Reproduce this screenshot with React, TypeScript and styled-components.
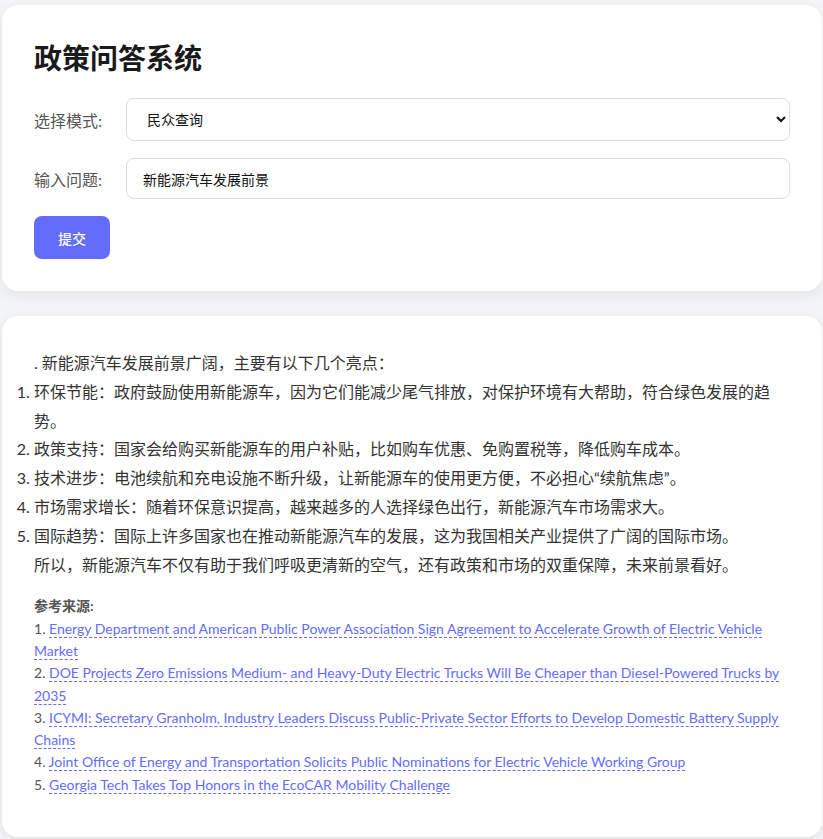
import React, { useState } from "react";
import styled, { createGlobalStyle } from "styled-components";

const GlobalStyle = createGlobalStyle`
  html, body {
    margin: 0;
    padding: 0;
    background: #f3f4f6;
  }
  body {
    font-family: "Lato", "Noto Sans CJK SC", sans-serif;
    color: #333;
  }
  * { box-sizing: border-box; }
`;

const Page = styled.div`
  display: flex;
  flex-direction: column;
  gap: 25px;
  padding: 5px 1px 4px 2px;
`;

const Card = styled.section<{ $bottom?: number }>`
  background: #fff;
  border-radius: 16px;
  box-shadow: 0 4px 14px rgba(0, 0, 0, 0.07);
  padding: 32px;
  padding-bottom: ${(p) => p.$bottom ?? 32}px;
`;

const Title = styled.h1`
  margin: 0 0 19px;
  font-size: 28px;
  line-height: 42px;
  font-weight: 700;
  color: #1a1a1a;
`;

const Form = styled.form`
  display: flex;
  flex-direction: column;
  gap: 17px;
  align-items: flex-start;
`;

const Row = styled.div`
  display: grid;
  grid-template-columns: 92px 1fr;
  align-items: center;
  width: 100%;
`;

const Label = styled.label`
  font-size: 16px;
  color: #555;
`;

const Select = styled.select`
  height: 43px;
  width: 100%;
  padding: 0 12px 0 16px;
  font-family: inherit;
  font-size: 14px;
  color: #111;
  background: #fff;
  border: 1px solid #dcdcdc;
  border-radius: 8px;
`;

const Input = styled.input`
  height: 41px;
  width: 100%;
  padding: 0 16px;
  font-family: inherit;
  font-size: 14px;
  color: #111;
  background: #fff;
  border: 1px solid #dcdcdc;
  border-radius: 8px;
  outline: none;
`;

const Button = styled.button`
  height: 43px;
  padding: 0 24px;
  border: none;
  border-radius: 8px;
  background: #646cff;
  color: #fff;
  font-family: inherit;
  font-size: 14px;
  font-weight: 500;
  cursor: pointer;
`;

const Answer = styled.div`
  font-size: 16px;
  line-height: 28.8px;
  color: #333;
  padding-top: 1px;
`;

const Para = styled.p`
  margin: 0;
`;

const List = styled.ol`
  margin: 0;
  padding: 0;
`;

const Sources = styled.div`
  margin-top: 16px;
  font-size: 14px;
  line-height: 22.3px;
  color: #555;
`;

const SourcesHead = styled.div`
  font-weight: 700;
  color: #555;
`;

const SourceLink = styled.a`
  color: #646cff;
  text-decoration: none;
  border-bottom: 1px dashed #646cff;
`;

const points = [
  "环保节能：政府鼓励使用新能源车，因为它们能减少尾气排放，对保护环境有大帮助，符合绿色发展的趋势。",
  "政策支持：国家会给购买新能源车的用户补贴，比如购车优惠、免购置税等，降低购车成本。",
  "技术进步：电池续航和充电设施不断升级，让新能源车的使用更方便，不必担心“续航焦虑”。",
  "市场需求增长：随着环保意识提高，越来越多的人选择绿色出行，新能源汽车市场需求大。",
  "国际趋势：国际上许多国家也在推动新能源汽车的发展，这为我国相关产业提供了广阔的国际市场。",
];

const sources = [
  "Energy Department and American Public Power Association Sign Agreement to Accelerate Growth of Electric Vehicle Market",
  "DOE Projects Zero Emissions Medium- and Heavy-Duty Electric Trucks Will Be Cheaper than Diesel-Powered Trucks by 2035",
  "ICYMI: Secretary Granholm, Industry Leaders Discuss Public-Private Sector Efforts to Develop Domestic Battery Supply Chains",
  "Joint Office of Energy and Transportation Solicits Public Nominations for Electric Vehicle Working Group",
  "Georgia Tech Takes Top Honors in the EcoCAR Mobility Challenge",
];

export default function App() {
  const [mode, setMode] = useState("public");
  const [question, setQuestion] = useState("新能源汽车发展前景");

  return (
    <>
      <GlobalStyle />
      <Page>
        <Card>
          <Title>政策问答系统</Title>
          <Form onSubmit={(e) => e.preventDefault()}>
            <Row>
              <Label htmlFor="mode">选择模式:</Label>
              <Select id="mode" value={mode} onChange={(e) => setMode(e.target.value)}>
                <option value="public">民众查询</option>
                <option value="expert">专业分析</option>
              </Select>
            </Row>
            <Row>
              <Label htmlFor="question">输入问题:</Label>
              <Input
                id="question"
                value={question}
                onChange={(e) => setQuestion(e.target.value)}
              />
            </Row>
            <Button type="submit">提交</Button>
          </Form>
        </Card>
        <Card $bottom={41}>
          <Answer>
            <Para>. 新能源汽车发展前景广阔，主要有以下几个亮点：</Para>
            <List>
              {points.map((p) => (
                <li key={p}>{p}</li>
              ))}
            </List>
            <Para>所以，新能源汽车不仅有助于我们呼吸更清新的空气，还有政策和市场的双重保障，未来前景看好。</Para>
          </Answer>
          <Sources>
            <SourcesHead>参考来源:</SourcesHead>
            {sources.map((s, i) => (
              <div key={s}>
                {i + 1}. <SourceLink href="#">{s}</SourceLink>
              </div>
            ))}
          </Sources>
        </Card>
      </Page>
    </>
  );
}
